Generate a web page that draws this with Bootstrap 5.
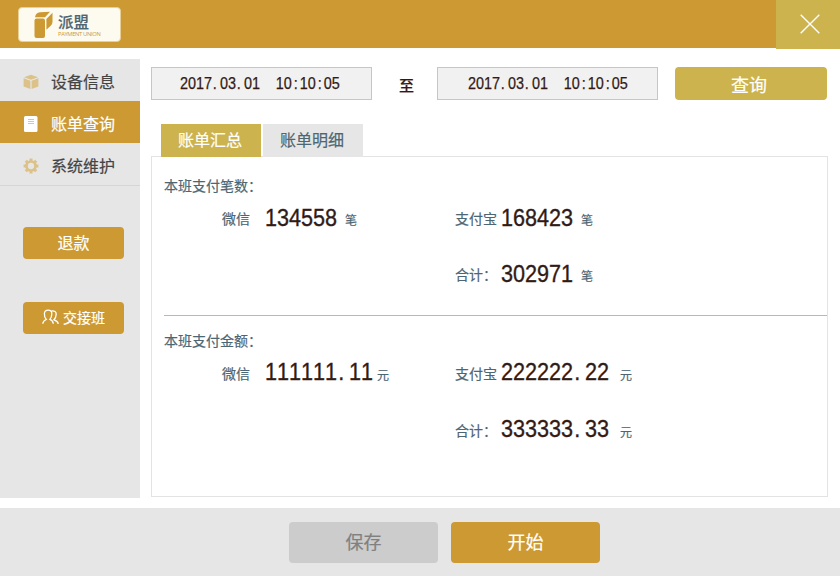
<!DOCTYPE html>
<html lang="zh-CN">
<head>
<meta charset="utf-8">
<meta name="viewport" content="width=device-width, initial-scale=1">
<title>派盟 - 账单查询</title>
<link href="https://cdn.jsdelivr.net/npm/bootstrap@5.3.0/dist/css/bootstrap.min.css" rel="stylesheet">
<style>
:root{--gold:#cc9933;--olive:#ccb34d;--slate:#4d6673;--ink:#331a14;--pale:#e6e6e6}
body{font-family:"Noto Sans CJK SC",sans-serif;font-size:14px;width:840px;height:577px;overflow:hidden;line-height:1;-webkit-text-stroke:.2px}
.topbar{height:48px;background:var(--gold);padding-left:18px}
.brand{width:103px;height:35px;margin-top:7px;background:#fdfbf0;border:1px solid #e8cf98;border-radius:4px;padding-left:14px}
.brand-cn{font-size:15.5px;font-weight:500;color:var(--slate);line-height:16px;white-space:nowrap;margin:1px 0 2px}
.brand-en{font:500 5.8px/6px "Open Sans",sans-serif;color:var(--gold);white-space:nowrap;letter-spacing:-.35px;-webkit-text-stroke:0}
.close-box{width:64px;height:49px;background:var(--olive);border:0;padding:0 0 2px 3px}
.side{width:140px;height:439px;margin-top:11px;background:var(--pale)}
.side-link,.side-link:hover{height:42px;padding:2px 0 0 23px;font-size:16px;color:#444;border-radius:0}
.side-link svg{width:16px;margin-right:12px;margin-top:2px}
.side-link.active{background:var(--gold);color:#fff;padding-top:2px}
.side-link.last{height:43px;border-bottom:1px solid #d6d6d6}
.btn-gold,.btn-gold:hover{background:var(--gold);color:#fff;border:0;border-radius:4px}
.side .btn-gold{width:101px;height:32px;font-size:16px;margin-left:23px;line-height:1;padding-bottom:8px}
.side .b1{margin-top:41px}
.side .b2{margin-top:43px;font-size:14px}
.main{padding:19px 12px 0 11px}
.stamp{width:221px;height:33px;background:#f1f1f1;border:1px solid #c6c6c6;padding:0 0 0 28px}
.stamp.until{padding-left:30px}
.digits{display:inline-flex;font-family:"Liberation Sans",sans-serif;color:var(--ink);white-space:pre;transform:scaleX(.9);transform-origin:left center}
.digits i{font-style:normal;flex:none;width:.5556em}
.digits .colon{text-align:center}
.digits .dot{text-indent:.06em}
.stamp .digits{font-size:16px;-webkit-text-stroke:.25px var(--ink)}
.to{width:65px;font-size:15px;font-weight:500;color:var(--ink);padding:1px 0 0 4px}
.btn-olive,.btn-olive:hover{width:152px;height:33px;margin-left:17px;background:var(--olive);color:#fff;border:0;border-radius:4px;font-size:18px;line-height:1;padding:0 4px 0 0}
.tabs{margin:24px 0 0 10px;gap:2px}
.tabs .nav-link{width:100px;height:33px;background:var(--pale);color:var(--slate);font-size:16px;border-radius:0;padding:0 2px 3px 0}
.tabs .nav-link.active{background:var(--olive);color:#fff}
.panel{width:677px;height:341px;border:1px solid #e3e3e3;margin-top:-1px;padding-left:12px;color:var(--slate)}
.sect{height:155px}
.sect.first{height:159px;border-bottom:1px solid #b8b8b8}
.sect-title{height:37px;padding-top:17px}
.first .sect-title{height:40px;padding-top:21px}
.line-row{height:56px;display:grid;grid-template-columns:101px 190px 46px 1fr;padding-top:10px;align-items:start}
.line-row.amount{height:57px;padding-top:9px}
.line-row .lab{line-height:20px;padding-top:1px;white-space:nowrap}
.line-row .wx{padding-left:58px}
.val{display:flex;height:20px}
.val .digits{font-size:24px;line-height:20px;width:72px;-webkit-text-stroke:.35px var(--ink)}
.first .val .digits{padding-top:1px;height:21px}
.val .u{font-size:12px;line-height:20px;padding-top:3px;margin-left:8px;flex:none}
.amount .digits{width:112px}
.amount .u{margin-left:7px}
.amount .narrow{margin-left:0}
.foot{height:68px;margin-top:10px;background:var(--pale);padding:14px 0 0 289px;gap:13px}
.foot .btn{width:149px;height:41px;font-size:18px;border:0;border-radius:4px;line-height:1;padding-top:4px;padding-bottom:7px}
.btn-dim,.btn-dim:disabled{background:#ccc;color:#808080;opacity:1}
</style>
<script src="https://cdn.jsdelivr.net/npm/bootstrap@5.3.0/dist/js/bootstrap.bundle.min.js"></script>
</head>
<body class="bg-white">
<header class="topbar d-flex justify-content-between align-items-start">
  <div class="brand d-flex align-items-center">
    <svg width="21" height="28" viewBox="0 0 21 28" fill="#cc9933"><rect x="1.5" y="7.5" width="10.5" height="19.5" rx="2"/><path d="M2 6.3C2.5 3 4 1.7 7 1.3L17 .8 12 6.3z"/><path d="M19.5 1.8 13.4 8v10.8l4.3-4q1.800-1.600 1.800-4z"/></svg>
    <div class="ms-1"><div class="brand-cn">派盟</div><div class="brand-en">PAYMENT UNION</div></div>
  </div>
  <button class="close-box d-flex align-items-center justify-content-center" aria-label="关闭"><svg width="20" height="20" viewBox="0 0 20 20" stroke="#fff" stroke-width="1.4"><path d="M.7.7 19.3 19.3M19.3.7.7 19.3"/></svg></button>
</header>
<div class="d-flex">
  <aside class="side flex-shrink-0">
    <nav class="nav flex-column flex-nowrap">
      <a class="nav-link side-link d-flex align-items-center" href="#"><svg height="16" viewBox="0 0 16 16" fill="#dcc289"><path d="M8 .8 15 3.2 8 5.7 1 3.2zM.6 4.3 7.4 6.7V15L.6 12.6zM15.4 4.3 8.6 6.7V15l6.8-2.4z"/></svg>设备信息</a>
      <a class="nav-link side-link active d-flex align-items-center" href="#"><svg height="18" viewBox="0 0 16 18"><rect x="1" y="1" width="13.5" height="16" rx="1.5" fill="#fff"/><path d="M5 4.5h6M5 6.5h6M5 8.5h6" stroke="#dcb870" stroke-width=".8"/></svg>账单查询</a>
      <a class="nav-link side-link last d-flex align-items-center" href="#"><svg height="16" viewBox="-8 -8 16 16"><circle r="4.5" fill="none" stroke="#dcc289" stroke-width="2.7"/><path d="M0-7.4V-5M0 5v2.4M-7.4 0H-5M5 0h2.4M-5.2-5.2l1.6 1.6M5.2-5.2 3.6-3.6M-5.2 5.2l1.6-1.6M5.2 5.2 3.6 3.6" stroke="#dcc289" stroke-width="3"/></svg>系统维护</a>
    </nav>
    <button class="btn btn-gold b1 d-flex align-items-center justify-content-center">退款</button>
    <button class="btn btn-gold b2 d-flex align-items-center justify-content-center px-0"><svg class="me-1" width="17" height="16" viewBox="0 0 17 16" fill="none" stroke="#fff" stroke-width="1.3"><path d="M.8 14.8C1 12.3 2.2 11.3 4.3 10.5 2.800 8.800 2.200 7 2.400 4.500 2.600 2.300 4 1.200 6.100 1.200S9.800 2.400 9.800 4.700C9.800 7.200 9.200 8.900 7.900 10.400c2 .8 3.200 1.800 3.400 4.400M9.200 2.100c3.300-.6 5.100.8 5 3.200-.1 2.200-.8 4-2.200 5.500 2.300.7 3.900 1.700 4.300 4"/></svg>交接班</button>
  </aside>
  <main class="main flex-grow-1">
    <div class="d-flex">
      <div class="stamp d-flex align-items-center"><span class="digits" data-text="2017.03.01  10:10:05"></span></div>
      <div class="to d-flex align-items-center justify-content-center">至</div>
      <div class="stamp until d-flex align-items-center"><span class="digits" data-text="2017.03.01  10:10:05"></span></div>
      <button class="btn btn-olive">查询</button>
    </div>
    <nav class="nav tabs">
      <a class="nav-link active d-flex align-items-center justify-content-center" href="#">账单汇总</a>
      <a class="nav-link d-flex align-items-center justify-content-center" href="#">账单明细</a>
    </nav>
    <div class="panel">
      <section class="sect first">
        <div class="sect-title">本班支付笔数：</div>
        <div class="line-row"><span class="lab wx">微信</span><span class="val"><span class="digits" data-text="134558"></span><span class="u">笔</span></span><span class="lab">支付宝</span><span class="val"><span class="digits" data-text="168423"></span><span class="u">笔</span></span></div>
        <div class="line-row"><span></span><span></span><span class="lab">合计：</span><span class="val"><span class="digits" data-text="302971"></span><span class="u">笔</span></span></div>
      </section>
      <section class="sect">
        <div class="sect-title">本班支付金额：</div>
        <div class="line-row amount"><span class="lab wx">微信</span><span class="val"><span class="digits" data-text="111111.11"></span><span class="u narrow">元</span></span><span class="lab">支付宝</span><span class="val"><span class="digits" data-text="222222.22"></span><span class="u">元</span></span></div>
        <div class="line-row amount"><span></span><span></span><span class="lab">合计：</span><span class="val"><span class="digits" data-text="333333.33"></span><span class="u">元</span></span></div>
      </section>
    </div>
  </main>
</div>
<footer class="foot d-flex">
  <button class="btn btn-dim" disabled>保存</button>
  <button class="btn btn-gold">开始</button>
</footer>
<script>
// Give every digit and separator the same cell width
document.querySelectorAll('.digits').forEach(function(el){
  Array.from(el.dataset.text).forEach(function(ch){
    var cell=document.createElement('i');
    cell.textContent=ch;
    if(ch===':')cell.className='colon';
    if(ch==='.')cell.className='dot';
    el.appendChild(cell);
  });
});
</script>
</body>
</html>
